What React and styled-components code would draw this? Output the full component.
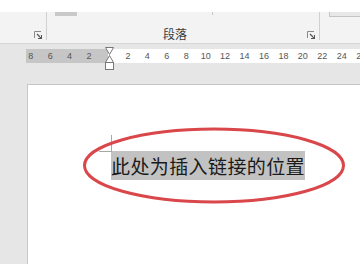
import React from 'react'
import styled, { createGlobalStyle } from 'styled-components'

const GlobalStyle = createGlobalStyle`
  html, body {
    margin: 0;
    padding: 0;
    background: #e6e6e6;
    font-family: "Noto Sans CJK SC", "Noto Sans", sans-serif;
    overflow: hidden;
  }
`

const rulerMarks = ['8', '6', '4', '2', '', '2', '4', '6', '8', '10', '12', '14', '16', '18', '20', '22', '24', '26']

function Launcher() {
  return (
    <svg width="8" height="8" viewBox="0 0 8 8">
      <path d="M0.5 7V0.5H7" fill="none" stroke="#8a8a8a" strokeWidth="1" />
      <path d="M3 3L7.5 7.5M7.5 4V7.5H4" fill="none" stroke="#555" strokeWidth="1.2" />
    </svg>
  )
}

function IndentMarker() {
  return (
    <svg width="9" height="24" viewBox="0 0 9 24">
      <path d="M0.5 0.5H8.5L4.5 7.5Z" fill="#fff" stroke="#777" />
      <path d="M4.5 8.5L8.5 15.5H0.5Z" fill="#fff" stroke="#777" />
      <rect x="0.5" y="15.5" width="8" height="7" fill="#fff" stroke="#777" />
    </svg>
  )
}

function App() {
  return (
    <>
      <GlobalStyle />
      <Window>
        <RibbonTop />
        <Ribbon>
          <Group width="46px">
            <LauncherSlot><Launcher /></LauncherSlot>
          </Group>
          <Separator />
          <Group width="272px">
            <TopBar left="8px" width="22px" />
            <TopTick left="165px" />
            <GroupLabel>段落</GroupLabel>
            <LauncherSlot><Launcher /></LauncherSlot>
          </Group>
          <Separator />
          <Group grow>
            <TopBar left="9px" width="40px" outlined />
          </Group>
        </Ribbon>
        <RulerRow>
          <Ruler>
            {rulerMarks.map((m, i) => (
              <RulerCell key={i}>{m}</RulerCell>
            ))}
          </Ruler>
          <MarkerSlot><IndentMarker /></MarkerSlot>
        </RulerRow>
        <Workspace>
          <Page>
            <Selected>此处为插入链接的位置</Selected>
            <Ring width="264" height="80" viewBox="0 0 264 80">
              <ellipse cx="132" cy="39.5" rx="129.5" ry="36.5" fill="none" stroke="#d9474b" strokeWidth="3" />
            </Ring>
          </Page>
        </Workspace>
      </Window>
    </>
  )
}

export default App

const Window = styled.div`
  width: 360px;
  height: 264px;
  display: flex;
  flex-direction: column;
  overflow: hidden;
`

const RibbonTop = styled.div`
  height: 12px;
  background: #ffffff;
`

const Ribbon = styled.div`
  height: 31px;
  display: flex;
  background: #f3f3f3;
  border-bottom: 1px solid #d6d6d6;
`

const Group = styled.div`
  position: relative;
  width: ${(p) => p.width || 'auto'};
  flex: ${(p) => (p.grow ? 1 : 'none')};
  display: flex;
  align-items: flex-end;
  justify-content: center;
  padding-bottom: 3px;
  box-sizing: border-box;
`

const Separator = styled.div`
  width: 1px;
  height: 28px;
  background: #d0d0d0;
`

const LauncherSlot = styled.div`
  position: absolute;
  right: 4px;
  bottom: 4px;
  display: flex;
`

const TopBar = styled.div`
  position: absolute;
  top: 0;
  left: ${(p) => p.left};
  width: ${(p) => p.width};
  height: 4px;
  background: ${(p) => (p.outlined ? '#e8e8e8' : '#c9c9c9')};
  border: ${(p) => (p.outlined ? '1px solid #c4c4c4' : 'none')};
  border-top: none;
`

const TopTick = styled.div`
  position: absolute;
  top: 0;
  left: ${(p) => p.left};
  width: 1px;
  height: 3px;
  background: #c8c8c8;
`

const GroupLabel = styled.span`
  font-size: 12px;
  line-height: 14px;
  color: #3c3c3c;
  margin-right: 16px;
  margin-bottom: -1px;
`

const RulerRow = styled.div`
  position: relative;
  margin-top: 5px;
  height: 14px;
  background: linear-gradient(to right, transparent 26px, #c6c6c6 26px, #c6c6c6 108px, #ffffff 108px);
`

const Ruler = styled.div`
  display: flex;
  padding-left: 21px;
  height: 14px;
  align-items: center;
`

const RulerCell = styled.span`
  flex: none;
  width: 19.45px;
  text-align: center;
  font-family: "Liberation Sans", Arial, sans-serif;
  font-size: 9px;
  line-height: 14px;
  color: #555;
`

const MarkerSlot = styled.div`
  position: absolute;
  left: 105px;
  top: -2px;
  display: flex;
`

const Workspace = styled.div`
  flex: 1;
  padding: 21px 0 0 27px;
  display: flex;
`

const Page = styled.div`
  position: relative;
  flex: 1;
  background: #ffffff;
  border-top: 1px solid #c6c6c6;
  border-left: 1px solid #c6c6c6;
  padding: 66px 0 0 83px;
`

const Selected = styled.span`
  position: relative;
  display: inline-block;
  background: #c2c2c2;
  color: #1a1a1a;
  font-size: 19px;
  line-height: 29px;
  letter-spacing: 0.4px;

  &::before {
    content: '';
    position: absolute;
    left: -12px;
    top: -16px;
    width: 12px;
    height: 16px;
    border-right: 1px solid #a8a8a8;
    border-bottom: 1px solid #a8a8a8;
  }
`

const Ring = styled.svg`
  position: absolute;
  left: 54px;
  top: 41px;
  pointer-events: none;
`
